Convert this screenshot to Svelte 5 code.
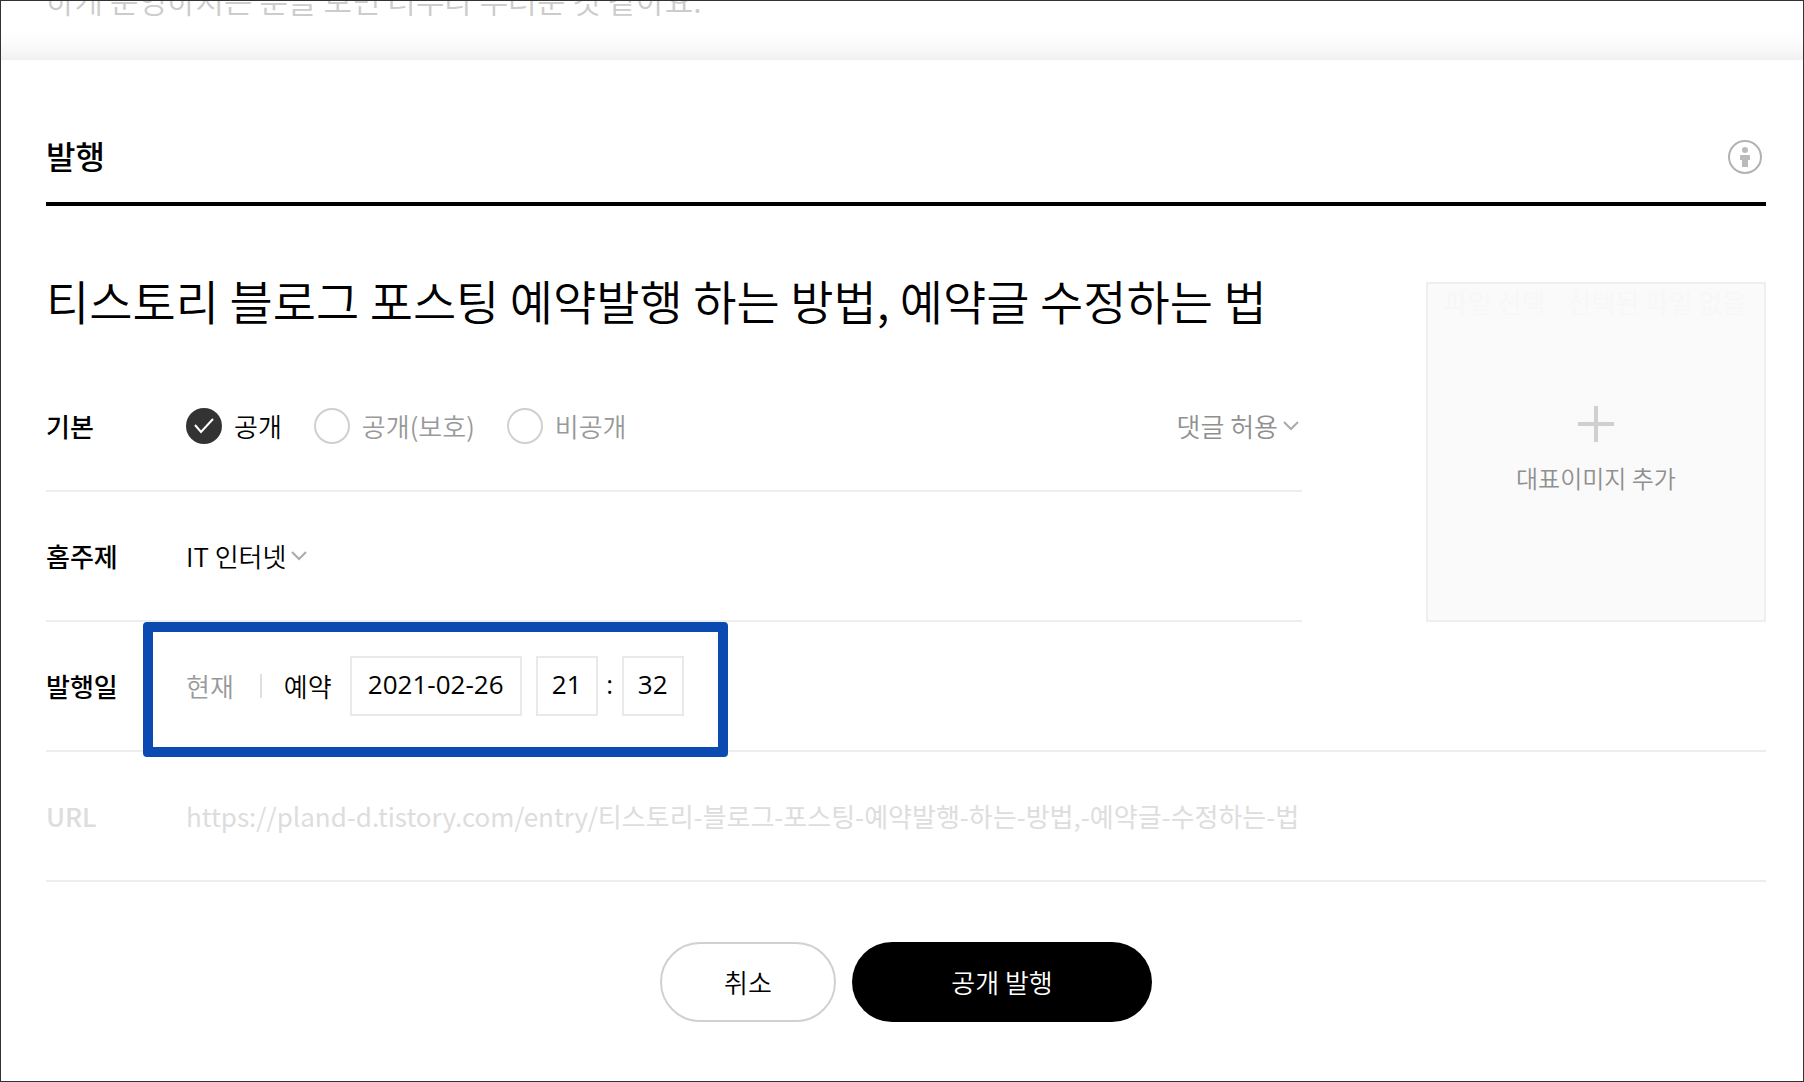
<script lang="ts">
	let title = $state('티스토리 블로그 포스팅 예약발행 하는 방법, 예약글 수정하는 법');
	let visibility = $state('public');
	let comment = $state('allow');
	let topic = $state('it');
	let date = $state('2021-02-26');
	let hour = $state('21');
	let minute = $state('32');

	const url = 'https://pland-d.tistory.com/entry/티스토리-블로그-포스팅-예약발행-하는-방법,-예약글-수정하는-법';

	const visibilityOptions = [
		{ value: 'public', label: '공개' },
		{ value: 'protected', label: '공개(보호)' },
		{ value: 'private', label: '비공개' }
	];
</script>

<div class="page">
	<div class="editor">
		<p>하게 운영하시는 분들 보면 너무나 부러운 것 같아요.</p>
	</div>

	<section class="layer">
		<header class="layer-head">
			<h2>발행</h2>
			<button type="button" class="ccl-btn" aria-label="CCL">
				<svg viewBox="0 0 34 34" width="34" height="34">
					<circle cx="17" cy="17" r="16" fill="none" stroke="#b2b2b2" stroke-width="2" />
					<circle cx="17" cy="10" r="3" fill="#bbb" />
					<path d="M13 15h8a1 1 0 0 1 1 1v4h-2v7h-6v-7h-2v-4a1 1 0 0 1 1-1z" fill="#bbb" />
				</svg>
			</button>
		</header>

		<div class="top">
			<div class="top-main">
				<input class="title" type="text" aria-label="제목" bind:value={title} />

				<div class="row">
					<span class="name">기본</span>
					<div class="radios" role="radiogroup" aria-label="기본">
						{#each visibilityOptions as option}
							<label class="radio" class:on={visibility === option.value}>
								<input type="radio" name="visibility" value={option.value} bind:group={visibility} />
								<span class="mark">
									{#if visibility === option.value}
										<svg viewBox="0 0 36 36" width="36" height="36">
											<path d="M9 17l6 7 12-13" fill="none" stroke="#fff" stroke-width="2" />
										</svg>
									{/if}
								</span>
								{option.label}
							</label>
						{/each}
					</div>
					<div class="select comment">
						<select aria-label="댓글" bind:value={comment}>
							<option value="allow">댓글 허용</option>
						</select>
						<svg viewBox="0 0 16 10" width="16" height="10"><path d="M1 1l7 7 7-7" /></svg>
					</div>
				</div>

				<div class="row">
					<label class="name" for="topic">홈주제</label>
					<div class="select">
						<select id="topic" bind:value={topic}>
							<option value="it">IT 인터넷</option>
						</select>
						<svg viewBox="0 0 16 10" width="16" height="10"><path d="M1 1l7 7 7-7" /></svg>
					</div>
				</div>
			</div>

			<label class="thumb">
				<input type="file" accept="image/*" />
				<span class="file-text"><span>파일 선택</span><span>선택된 파일 없음</span></span>
				<svg viewBox="0 0 36 36" width="36" height="36">
					<path d="M18 0v36M0 18h36" stroke="#d0d0d0" stroke-width="4" />
				</svg>
				<span class="thumb-text">대표이미지 추가</span>
			</label>
		</div>

		<div class="row date-row">
			<span class="name">발행일</span>
			<button type="button" class="when now">현재</button>
			<span class="bar"></span>
			<button type="button" class="when">예약</button>
			<input class="box date" type="text" aria-label="날짜" bind:value={date} />
			<input class="box" type="text" aria-label="시" bind:value={hour} />
			<span class="colon">:</span>
			<input class="box" type="text" aria-label="분" bind:value={minute} />
			<div class="highlight"></div>
		</div>

		<div class="row url-row">
			<span class="name">URL</span>
			<span class="url">{url}</span>
		</div>

		<div class="actions">
			<button type="button" class="cancel-btn">취소</button>
			<button type="button" class="publish-btn">공개 발행</button>
		</div>
	</section>
</div>

<style>
	:global(body) {
		background-color: #fff;
	}

	.page {
		box-sizing: border-box;
		min-height: 100vh;
		border: 1px solid #333;
		background-color: #fff;
		font-family: 'Noto Sans CJK KR', sans-serif;
		font-size: 26px;
		font-weight: 350;
		line-height: 40px;
		color: #000;
		overflow: hidden;
	}

	button,
	input,
	select {
		margin: 0;
		padding: 0;
		border: none;
		background: none;
		font: inherit;
		color: inherit;
	}

	button,
	select {
		cursor: pointer;
	}

	svg {
		display: block;
	}

	.editor {
		display: flex;
		align-items: flex-end;
		height: 59px;
		padding: 0 45px;
		box-sizing: border-box;
		overflow: hidden;
	}

	.editor p {
		margin: 0 0 36px;
		font-size: 31px;
		line-height: 48px;
		color: #ccc;
	}

	.layer {
		position: relative;
		padding: 60px 37px 59px 45px;
		background-color: #fff;
		box-shadow: 0 30px 30px 30px rgba(0, 0, 0, 0.12);
	}

	.layer-head {
		display: flex;
		align-items: center;
		justify-content: space-between;
		height: 86px;
		padding-top: 8px;
		padding-right: 4px;
		padding-bottom: 16px;
		box-sizing: border-box;
		border-bottom: 4px solid #000;
	}

	h2 {
		margin: 0;
		padding-bottom: 4px;
		font-size: 32px;
		font-weight: 500;
	}

	.top {
		display: flex;
		justify-content: space-between;
		gap: 124px;
	}

	.top-main {
		flex: 1;
		min-width: 0;
	}

	.title {
		display: block;
		width: 100%;
		height: 60px;
		margin: 64px 0 32px;
		font-size: 47px;
		line-height: 60px;
	}

	.row {
		display: flex;
		align-items: center;
		height: 130px;
		box-sizing: border-box;
		border-bottom: 2px solid #eee;
	}

	.name {
		flex: none;
		width: 140px;
		font-weight: 500;
	}

	.radios {
		display: flex;
		gap: 32px;
	}

	.radio {
		display: flex;
		align-items: center;
		gap: 12px;
		color: #999;
		cursor: pointer;
	}

	.radio.on {
		color: #000;
	}

	.radio input {
		position: absolute;
		opacity: 0;
	}

	.mark {
		width: 36px;
		height: 36px;
		box-sizing: border-box;
		border: 2px solid #d0d0d0;
		border-radius: 50%;
	}

	.on .mark {
		border: none;
		background-color: #333;
	}

	.select {
		display: flex;
		align-items: center;
		color: #000;
	}

	.select select {
		appearance: none;
		field-sizing: content;
		padding-right: 25px;
		margin-right: -20px;
	}

	.select svg {
		pointer-events: none;
		fill: none;
		stroke: #aaa;
		stroke-width: 2;
	}

	.comment {
		margin-left: auto;
		padding-right: 3px;
		color: #909090;
	}

	.thumb {
		position: relative;
		display: flex;
		flex-direction: column;
		align-items: center;
		flex: none;
		width: 340px;
		height: 340px;
		margin-top: 76px;
		padding-top: 122px;
		box-sizing: border-box;
		border: 2px solid #efefef;
		background-color: #fafafa;
		cursor: pointer;
	}

	.thumb input {
		position: absolute;
		width: 100%;
		opacity: 0;
	}

	.file-text {
		position: absolute;
		top: 0;
		left: 16px;
		display: flex;
		gap: 22px;
		line-height: 36px;
		color: #f7f7f7;
		white-space: nowrap;
	}

	.thumb-text {
		margin-top: 16px;
		font-size: 24px;
		color: #909090;
	}

	.date-row {
		position: relative;
	}

	.now {
		color: #999;
	}

	.bar {
		width: 2px;
		height: 24px;
		margin: 0 22px 0 26px;
		background-color: #e0e0e0;
	}

	.box,
	.colon {
		padding-bottom: 4px;
		font-family: 'Open Sans', sans-serif;
		font-weight: 400;
		text-align: center;
	}

	.box {
		width: 62px;
		height: 60px;
		box-sizing: border-box;
		border: 2px solid #e9e9e9;
	}

	.date {
		width: 172px;
		margin: 0 14px 0 18px;
	}

	.colon {
		width: 24px;
	}

	.highlight {
		position: absolute;
		top: 0;
		left: 97px;
		width: 585px;
		height: 135px;
		box-sizing: border-box;
		border: 10px solid #0b4ab1;
		border-radius: 4px;
		pointer-events: none;
	}

	.url-row {
		color: #ddd;
	}

	.url {
		font-weight: 400;
	}

	.actions {
		display: flex;
		justify-content: center;
		gap: 16px;
		margin-top: 60px;
	}

	.cancel-btn,
	.publish-btn {
		width: 176px;
		height: 80px;
		border-radius: 40px;
	}

	.cancel-btn {
		border: 2px solid #d0d0d0;
	}

	.publish-btn {
		width: 300px;
		background-color: #000;
		color: #fff;
	}
</style>
